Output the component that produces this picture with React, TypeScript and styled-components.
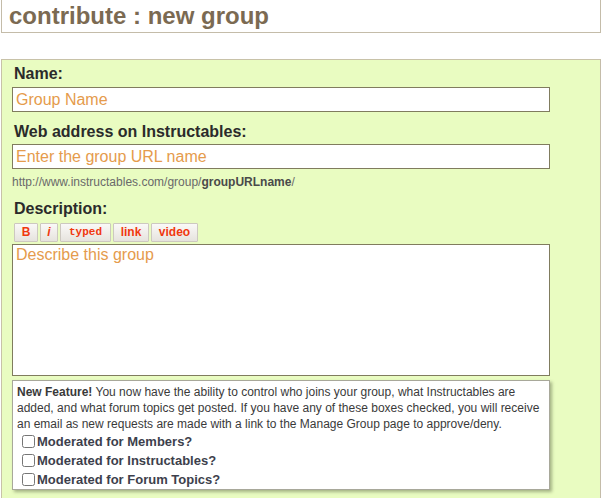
import React from "react";
import styled, { createGlobalStyle } from "styled-components";

const Global = createGlobalStyle`
  html, body { margin: 0; padding: 0; background: #ffffff; }
  body { font-family: "Liberation Sans", Arial, sans-serif; }
`;

const Page = styled.div`
  width: 601px;
  padding-left: 1px;
  box-sizing: border-box;
`;

const TitleBox = styled.div`
  width: 600px;
  height: 33px;
  box-sizing: border-box;
  border: 1px solid #c4bca9;
  border-top: none;
  background: #ffffff;
  padding-left: 7px;
`;

const Title = styled.h1`
  margin: 0;
  font-size: 24px;
  line-height: 32px;
  font-weight: bold;
  color: #7b6a52;
`;

const Panel = styled.div`
  margin-top: 26px;
  width: 600px;
  box-sizing: border-box;
  background: #e9fcc1;
  border: 1px solid #c8c2a8;
  border-right-color: #c4bca9;
  padding: 5px 10px 20px 10px;
`;

const Label = styled.div<{ $top: number }>`
  margin-top: ${(p) => p.$top}px;
  padding-left: 2px;
  font-size: 16px;
  line-height: 18px;
  font-weight: bold;
  color: #2b2b2b;
`;

const Input = styled.input<{ $top: number }>`
  display: block;
  margin: ${(p) => p.$top}px 0 0 0;
  width: 538px;
  height: 25px;
  box-sizing: border-box;
  border: 1px solid #807c5e;
  background: #ffffff;
  padding: 1px 3px;
  font-family: "Liberation Sans", Arial, sans-serif;
  font-size: 16px;
  outline: none;
  &::placeholder { color: #e59b4c; opacity: 1; }
`;

const Hint = styled.div`
  margin-top: 6px;
  font-size: 12px;
  line-height: 14px;
  color: #6a6a6a;
  b { color: #4a4a4a; }
`;

const Toolbar = styled.div`
  display: flex;
  gap: 2px;
  margin-top: 5px;
  padding-left: 2px;
`;

const ToolButton = styled.button<{ $mono?: boolean; $italic?: boolean; $w: number }>`
  width: ${(p) => p.$w}px;
  height: 19px;
  box-sizing: border-box;
  padding: 0;
  border: 1px solid #cdc8c0;
  border-radius: 1px;
  background: linear-gradient(#faf9f7, #e6e3de);
  color: #f0380f;
  font-family: ${(p) => (p.$mono ? `"Liberation Mono", "Courier New", monospace` : `"Liberation Sans", Arial, sans-serif`)};
  font-style: ${(p) => (p.$italic ? "italic" : "normal")};
  font-weight: bold;
  font-size: ${(p) => (p.$mono ? "11px" : "12px")};
  line-height: 17px;
  text-align: center;
`;

const TextArea = styled.textarea`
  display: block;
  margin-top: 2px;
  width: 538px;
  height: 132px;
  box-sizing: border-box;
  border: 1px solid #807c5e;
  background: #ffffff;
  padding: 1px 3px;
  resize: none;
  font-family: "Liberation Sans", Arial, sans-serif;
  font-size: 16px;
  outline: none;
  &::placeholder { color: #e59b4c; opacity: 1; }
`;

const Notice = styled.div`
  margin-top: 4px;
  width: 538px;
  box-sizing: border-box;
  background: #ffffff;
  border: 1px solid #a8a89a;
  box-shadow: 2px 2px 3px rgba(80, 90, 60, 0.45);
  padding: 3px 2px 0 4px;
  font-size: 12px;
  line-height: 16px;
  color: #3a3a3a;
`;

const Options = styled.div`
  display: flex;
  flex-direction: column;
  padding-left: 5px;
`;

const Option = styled.label`
  display: flex;
  align-items: center;
  gap: 2px;
  height: 19px;
  font-size: 13px;
  font-weight: bold;
  color: #3d3f4c;
`;

const Check = styled.input`
  margin: 0;
  width: 13px;
  height: 13px;
`;

export default function App() {
  return (
    <Page>
      <Global />
      <TitleBox>
        <Title>contribute : new group</Title>
      </TitleBox>
      <Panel>
        <Label $top={0}>Name:</Label>
        <Input $top={4} placeholder="Group Name" />
        <Label $top={11}>Web address on Instructables:</Label>
        <Input $top={3} placeholder="Enter the group URL name" />
        <Hint>
          http://www.instructables.com/group/<b>groupURLname</b>/
        </Hint>
        <Label $top={11}>Description:</Label>
        <Toolbar>
          <ToolButton $w={24}>B</ToolButton>
          <ToolButton $w={18} $italic>i</ToolButton>
          <ToolButton $w={51} $mono>typed</ToolButton>
          <ToolButton $w={36}>link</ToolButton>
          <ToolButton $w={47}>video</ToolButton>
        </Toolbar>
        <TextArea placeholder="Describe this group" />
        <Notice>
          <b>New Feature!</b> You now have the ability to control who joins your group, what Instructables are
          <br />
          added, and what forum topics get posted. If you have any of these boxes checked, you will receive
          <br />
          an email as new requests are made with a link to the Manage Group page to approve/deny.
          <Options>
            <Option>
              <Check type="checkbox" /> Moderated for Members?
            </Option>
            <Option>
              <Check type="checkbox" /> Moderated for Instructables?
            </Option>
            <Option>
              <Check type="checkbox" /> Moderated for Forum Topics?
            </Option>
          </Options>
        </Notice>
      </Panel>
    </Page>
  );
}
